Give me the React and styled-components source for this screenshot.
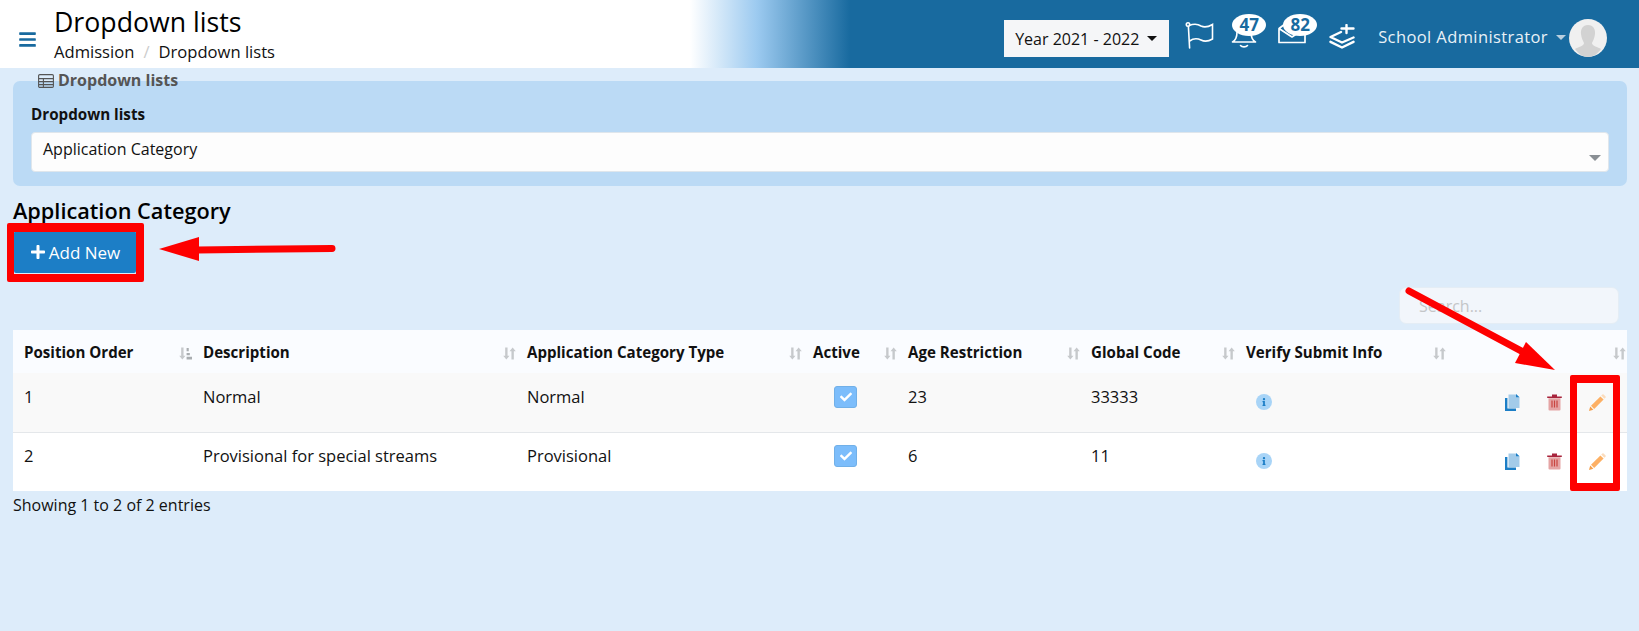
import React from "react";
import styled, { createGlobalStyle } from "styled-components";
import { FaBars, FaPlus, FaCheck, FaInfo } from "react-icons/fa";

const GlobalStyle = createGlobalStyle`
  html, body {
    margin: 0;
    padding: 0;
    height: 100%;
    overflow: hidden;
  }
  body {
    font-family: "Open Sans", "Noto Sans", sans-serif;
    font-size: 16px;
    color: #111;
    background: #ddecfa;
  }
  * { box-sizing: border-box; }
`;

const columns = [
  { label: "Position Order", width: 180, sorted: true },
  { label: "Description", width: 324 },
  { label: "Application Category Type", width: 286 },
  { label: "Active", width: 95 },
  { label: "Age Restriction", width: 183 },
  { label: "Global Code", width: 155 },
  { label: "Verify Submit Info", width: 211 },
  { label: "", width: 180 },
];

const rows = [
  { order: 1, description: "Normal", type: "Normal", age: 23, code: 33333 },
  { order: 2, description: "Provisional for special streams", type: "Provisional", age: 6, code: 11 },
];

const FlagIcon = () => (
  <svg width="29" height="28" viewBox="0 0 29 28" fill="none" stroke="#fff" strokeWidth="1.6">
    <circle cx="3" cy="3.5" r="1.7" />
    <path d="M3.4 5.5 L4.6 27" strokeLinecap="round" />
    <path d="M4 4.5 C9 2.5 13 3 16 5 C20 7 24 5.5 27.5 3.5 L27.5 18 C24 20 20 21 16 19 C12 17 8 17.5 4.6 20" />
  </svg>
);

const BellIcon = () => (
  <svg width="26" height="27" viewBox="0 0 26 27" fill="none" stroke="#fff" strokeWidth="1.6">
    <path d="M1.5 21 C5 19 6 16 6 11 C6 6 9 3 13 3 C17 3 20 6 20 11 C20 16 21 19 24.5 21 Z" strokeLinejoin="round" />
    <path d="M9.5 24.5 C11 26.3 15 26.3 16.5 24.5" strokeLinecap="round" />
  </svg>
);

const MailIcon = () => (
  <svg width="28" height="24" viewBox="0 0 28 24" fill="none" stroke="#fff" strokeWidth="1.7">
    <path d="M1 8.5 L9 2.5 M27 8 V22.5 H1 V8.5 L14 17 L27 8" strokeLinejoin="round" />
  </svg>
);

const LayersPlusIcon = () => (
  <svg width="26" height="25" viewBox="0 0 26 25" fill="none" stroke="#fff" strokeWidth="2.4" strokeLinejoin="round" strokeLinecap="round">
    <path d="M17.5 1 V9 M12.5 4.5 H24.5" />
    <path d="M12 8 L1.5 13 L13 18.5 L24.5 13.5" />
    <path d="M1.5 17.8 L13 23.5 L24.5 17.8" />
  </svg>
);

const TableIcon = () => (
  <svg width="16" height="14" viewBox="0 0 16 14" fill="none" stroke="#555" strokeWidth="1.1">
    <rect x="0.6" y="0.6" width="14.8" height="12.8" rx="1.2" />
    <path d="M0.6 4.6 H15.4 M0.6 7.6 H15.4 M0.6 10.6 H15.4 M5.4 4.6 V13.4" />
  </svg>
);

const SortIcon = ({ sorted }) => (
  <svg width="13" height="13" viewBox="0 0 12 12" fill="#c6c9cc">
    <path d="M2 0.5 H4.2 V8 H6 L3.1 11.5 L0.2 8 H2 Z" />
    {sorted ? (
      <path d="M7 1 H9 V4 H7 Z M7 5.5 H10 V7.7 H7 Z M7 9 H12 V11.5 H7 Z" fill="#a9adb0" />
    ) : (
      <path d="M7.8 11.5 H10 V4 H11.8 L8.9 0.5 L6 4 H7.8 Z" />
    )}
  </svg>
);

const CopyIcon = () => (
  <svg width="15" height="17" viewBox="0 0 15 17">
    <path d="M0 4 H2.4 V14.6 H11 V17 H0 Z" fill="#1c7ec6" />
    <path d="M3.5 0.5 H11 L14.5 3.5 V14 H3.5 Z" fill="#a3cbe9" />
    <path d="M11 0 L14.5 3.3 H11 Z" fill="#1c7ec6" />
  </svg>
);

const TrashIcon = () => (
  <svg width="15" height="17" viewBox="0 0 15 17">
    <path d="M0.2 2.4 H5 V0.6 H10 V2.4 H14.8 V4 H0.2 Z" fill="#a8243c" />
    <path d="M1.5 4.2 H13.5 V15.6 Q13.5 16.6 12.4 16.6 H2.6 Q1.5 16.6 1.5 15.6 Z" fill="#e5a5a5" />
    <path d="M4.4 6.4 H5.6 V13.6 H4.4 Z M6.9 6.4 H8.1 V13.6 H6.9 Z M9.4 6.4 H10.6 V13.6 H9.4 Z" fill="#c8443e" />
  </svg>
);

const PencilIcon = () => (
  <svg width="17" height="17" viewBox="0 0 17 17">
    <path d="M0 17 L1.2 12.6 L4.4 15.8 Z" fill="#f5a04c" />
    <path d="M2 11.8 L11.4 2.4 L14.6 5.6 L5.2 15 Z" fill="#fdb064" />
    <path d="M12.2 1.6 L13.4 0.4 Q14 0 14.6 0.4 L16.6 2.4 Q17 3 16.6 3.6 L15.4 4.8 Z" fill="#fbdcbc" />
  </svg>
);

const AvatarIcon = () => (
  <svg width="38" height="38" viewBox="0 0 38 38">
    <circle cx="19" cy="19" r="19" fill="#f0f0f0" />
    <path d="M19 6 C13.5 6 11.5 10.5 12 15 C12.4 19 14 22 15 24 C15 27 9 28 6 30 C9.5 35 14 38 19 38 C24 38 28.5 35 32 30 C29 28 23 27 23 24 C24 22 25.6 19 26 15 C26.5 10.5 24.5 6 19 6 Z" fill="#d2d2d2" />
  </svg>
);

const Annotations = () => (
  <AnnotationLayer viewBox="0 0 1639 631" width="1639" height="631">
    <path
      fillRule="evenodd"
      fill="#fe0000"
      d="M9 223 H142 Q144 223 144 225 V280 Q144 282 142 282 H9 Q7 282 7 280 V225 Q7 223 9 223 Z M14 232 V274 H136 V232 Z"
    />
    <path d="M332 248.5 L198 250" stroke="#fe0000" strokeWidth="7" strokeLinecap="round" />
    <polygon points="159,249 199,237 199,261" fill="#fe0000" />
    <path
      fillRule="evenodd"
      fill="#fe0000"
      d="M1572 375 H1618 Q1620 375 1620 377 V489 Q1620 491 1618 491 H1572 Q1570 491 1570 489 V377 Q1570 375 1572 375 Z M1577 383 V483 H1613 V383 Z"
    />
    <path d="M1409 291 L1540 361" stroke="#fe0000" strokeWidth="7" strokeLinecap="round" />
    <polygon points="1555,370 1515,363 1526,342" fill="#fe0000" />
  </AnnotationLayer>
);

export default function App() {
  return (
    <Page>
      <GlobalStyle />
      <TopBar>
        <MenuButton><FaBars /></MenuButton>
        <TitleBlock>
          <PageTitle>Dropdown lists</PageTitle>
          <Breadcrumb>
            <span>Admission</span>
            <Slash>/</Slash>
            <span>Dropdown lists</span>
          </Breadcrumb>
        </TitleBlock>
        <YearButton>Year 2021 - 2022 <Caret /></YearButton>
        <IconSlot $width={46} $dy={2}><FlagIcon /></IconSlot>
        <IconSlot $width={47}>
          <BellIcon />
          <Badge $left={1}>47</Badge>
        </IconSlot>
        <IconSlot $width={51} $dy={-4}>
          <MailIcon />
          <Badge $left={5}>82</Badge>
        </IconSlot>
        <IconSlot $width={49} $dy={4}><LayersPlusIcon /></IconSlot>
        <UserName>School Administrator</UserName>
        <Caret $light />
        <Avatar><AvatarIcon /></Avatar>
      </TopBar>

      <Content>
        <FilterPanel>
          <PanelLegend><TableIcon /> Dropdown lists</PanelLegend>
          <FieldLabel>Dropdown lists</FieldLabel>
          <SelectBox>
            Application Category
            <SelectCaret />
          </SelectBox>
        </FilterPanel>

        <SectionTitle>Application Category</SectionTitle>
        <AddButton><FaPlus /> Add New</AddButton>

        <SearchRow>
          <SearchInput placeholder="Search..." />
        </SearchRow>

        <DataTable>
          <colgroup>
            {columns.map((col, i) => <col key={i} style={{ width: col.width }} />)}
          </colgroup>
          <thead>
            <tr>
              {columns.map((col, i) => (
                <HeadCell key={i}>
                  {col.label}
                  <SortSlot><SortIcon sorted={col.sorted} /></SortSlot>
                </HeadCell>
              ))}
            </tr>
          </thead>
          <tbody>
            {rows.map((row) => (
              <BodyRow key={row.order} $odd={row.order === 1}>
                <BodyCell>{row.order}</BodyCell>
                <BodyCell>{row.description}</BodyCell>
                <BodyCell>{row.type}</BodyCell>
                <BodyCell>
                  <CheckBox><FaCheck /></CheckBox>
                </BodyCell>
                <BodyCell>{row.age}</BodyCell>
                <BodyCell>{row.code}</BodyCell>
                <BodyCell>
                  <InfoDot><FaInfo /></InfoDot>
                </BodyCell>
                <BodyCell>
                  <Actions>
                    <CopyIcon />
                    <TrashIcon />
                    <PencilIcon />
                  </Actions>
                </BodyCell>
              </BodyRow>
            ))}
          </tbody>
        </DataTable>
        <TableInfo>Showing 1 to 2 of 2 entries</TableInfo>
      </Content>

      <Annotations />
    </Page>
  );
}

const Page = styled.div`
  position: relative;
  width: 1639px;
  height: 631px;
  overflow: hidden;
  background: #ddecfa;
`;

const TopBar = styled.header`
  display: flex;
  align-items: center;
  height: 68px;
  padding-right: 32px;
  background: linear-gradient(90deg, #fff 690px, #9ccaf0 757px, #186a9f 850px);
`;

const MenuButton = styled.div`
  display: flex;
  width: 54px;
  padding: 10px 0 0 18px;
  font-size: 19px;
  color: #186a9f;
`;

const TitleBlock = styled.div`
  flex: 1;
  margin-top: -2px;
`;

const PageTitle = styled.h1`
  margin: 0;
  font-size: 26.7px;
  font-weight: 400;
  line-height: 38px;
  color: #000;
`;

const Breadcrumb = styled.div`
  display: flex;
  font-size: 16.6px;
  line-height: 22px;
  color: #111;
`;

const Slash = styled.span`
  margin: 0 9px 0 9px;
  color: #ccc;
`;

const YearButton = styled.div`
  display: flex;
  align-items: center;
  justify-content: space-between;
  width: 165px;
  height: 37px;
  margin: 9px 16px 0 0;
  padding: 0 12px 0 11px;
  background: #f5f6f8;
  font-size: 16px;
  color: #111;
`;

const Caret = styled.span`
  display: inline-block;
  width: 0;
  height: 0;
  border-left: 5px solid transparent;
  border-right: 5px solid transparent;
  border-top: 5px solid ${(p) => (p.$light ? "#b9cfdf" : "#111")};
  margin: ${(p) => (p.$light ? "6px 3px 0 8px" : "0")};
`;

const IconSlot = styled.div`
  position: relative;
  display: flex;
  align-items: center;
  width: ${(p) => p.$width}px;
  height: 37px;
  svg { margin-top: ${(p) => p.$dy || 0}px; }
`;

const Badge = styled.span`
  position: absolute;
  top: -2px;
  left: ${(p) => p.$left}px;
  width: 34px;
  height: 22px;
  border-radius: 50%;
  background: #fff;
  color: #186a9f;
  font-size: 17px;
  font-weight: 700;
  line-height: 22px;
  text-align: center;
`;

const UserName = styled.div`
  margin-top: 5px;
  font-size: 16.5px;
  letter-spacing: 0.4px;
  color: #e9f1f7;
`;

const Avatar = styled.div`
  display: flex;
  width: 38px;
  height: 38px;
  margin-top: 7px;
`;

const Content = styled.main`
  padding: 0 12px 0 13px;
`;

const FilterPanel = styled.fieldset`
  margin: 2px 0 0;
  padding: 13px 18px 14px;
  border: 0;
  border-radius: 7px;
  background: #bbdaf5;
  min-width: 0;
`;

const PanelLegend = styled.legend`
  display: flex;
  align-items: center;
  gap: 4px;
  margin-left: 7px;
  padding: 0;
  font-size: 16px;
  font-weight: 700;
  line-height: 21px;
  color: #555;
`;

const FieldLabel = styled.div`
  margin-bottom: 8px;
  font-size: 15.2px;
  font-weight: 700;
  line-height: 20px;
  color: #111;
`;

const SelectBox = styled.div`
  position: relative;
  height: 40px;
  padding: 5px 11px;
  border: 1px solid #dfe6ec;
  border-radius: 4px;
  background: #fdfdfd;
  font-size: 16px;
  line-height: 22px;
`;

const SelectCaret = styled.span`
  position: absolute;
  right: 7px;
  top: 22px;
  width: 0;
  height: 0;
  border-left: 6px solid transparent;
  border-right: 6px solid transparent;
  border-top: 6px solid #8a8f94;
`;

const SectionTitle = styled.h2`
  margin: 10px 0 6px;
  font-size: 21.7px;
  font-weight: 600;
  line-height: 29px;
  color: #000;
`;

const AddButton = styled.button`
  display: flex;
  align-items: center;
  justify-content: center;
  gap: 3px;
  width: 122px;
  height: 42px;
  margin-left: 1px;
  border: 0;
  border-radius: 2px;
  background: #1c7ec6;
  color: #fff;
  font-family: inherit;
  font-size: 17px;
  svg { font-size: 16px; }
`;

const SearchRow = styled.div`
  display: flex;
  justify-content: flex-end;
  margin-top: 14px;
  padding-right: 8px;
`;

const SearchInput = styled.input`
  width: 220px;
  height: 37px;
  padding: 0 19px;
  border: 1px solid #e4edf5;
  border-radius: 7px;
  background: #f2f6fb;
  font-family: inherit;
  font-size: 16px;
  &::placeholder { color: #c4c6c8; }
`;

const DataTable = styled.table`
  width: 1614px;
  margin-top: 6px;
  border-collapse: collapse;
  table-layout: fixed;
  background: #fff;
`;

const HeadCell = styled.th`
  position: relative;
  height: 43px;
  padding: 0 10px;
  background: #fafcff;
  font-size: 15.1px;
  font-weight: 700;
  text-align: left;
  color: #111;
  &:first-child { padding-left: 11px; }
`;

const SortSlot = styled.span`
  position: absolute;
  right: 1px;
  top: 17px;
  display: flex;
`;

const BodyRow = styled.tr`
  height: 59px;
  background: ${(p) => (p.$odd ? "#f9f9f9" : "#fff")};
  border-top: ${(p) => (p.$odd ? "0" : "1px solid #e4e7ea")};
`;

const BodyCell = styled.td`
  padding: 12.5px 10px 0;
  vertical-align: top;
  font-size: 16.5px;
  line-height: 22px;
  color: #111;
  &:first-child { padding-left: 11px; }
`;

const CheckBox = styled.span`
  display: flex;
  align-items: center;
  justify-content: center;
  width: 23px;
  height: 22px;
  margin: 0 0 0 21px;
  border: 1px solid #71b0e8;
  border-radius: 3px;
  background: #7cbdfb;
  color: #fff;
  font-size: 12px;
`;

const InfoDot = styled.span`
  display: flex;
  align-items: center;
  justify-content: center;
  width: 16px;
  height: 16px;
  margin: 8px 0 0 10px;
  border-radius: 50%;
  background: #a8d4f7;
  color: #1c7ec6;
  font-size: 8px;
`;

const Actions = styled.div`
  display: flex;
  gap: 27px;
  align-items: flex-start;
  margin: 8px 0 0 48px;
`;

const TableInfo = styled.div`
  margin-top: 3px;
  font-size: 16px;
  line-height: 22px;
  color: #111;
`;

const AnnotationLayer = styled.svg`
  position: absolute;
  left: 0;
  top: 0;
  pointer-events: none;
`;
